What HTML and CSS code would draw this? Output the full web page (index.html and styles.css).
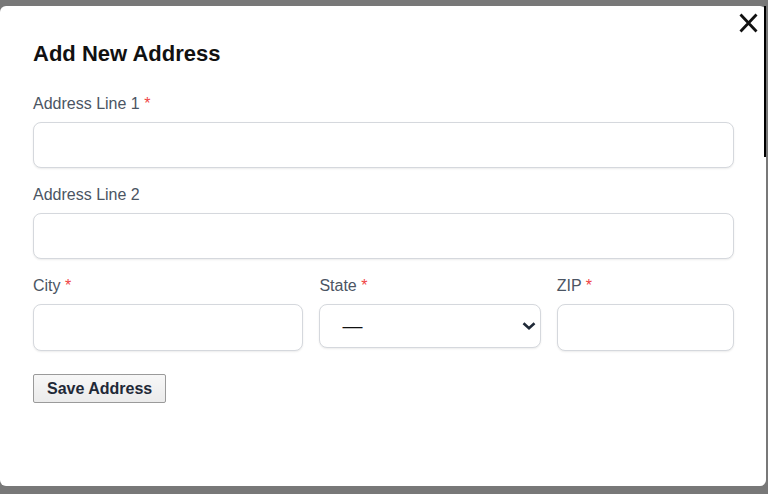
FILE: index.html
```html
<!DOCTYPE html>
<html lang="en">
<head>
<meta charset="utf-8">
<title>Add New Address</title>
<link rel="stylesheet" href="styles.css">
</head>
<body>
<div class="overlay">
  <div class="dialog">
    <button class="close" aria-label="Close">
      <svg width="19" height="20" viewBox="0 0 19 20"><path d="M1.5 1.5 L17.5 18.5 M17.5 1.5 L1.5 18.5" stroke="#111" stroke-width="2.8" stroke-linecap="butt" fill="none"/></svg>
    </button>
    <span class="edge"></span>
    <h2 class="title">Add New Address</h2>
    <form class="form">
      <div class="field">
        <label class="label">Address Line 1 <span class="req">*</span></label>
        <input class="input" type="text">
      </div>
      <div class="field">
        <label class="label">Address Line 2</label>
        <input class="input" type="text">
      </div>
      <div class="row">
        <div class="field">
          <label class="label">City <span class="req">*</span></label>
          <input class="input" type="text">
        </div>
        <div class="field">
          <label class="label">State <span class="req">*</span></label>
          <div class="select-wrap">
            <select class="select"><option>—</option></select>
            <svg class="chevron" width="14" height="8" viewBox="0 0 14 8"><path d="M1.5 1.2 L7 6.2 L12.5 1.2" stroke="#1f2937" stroke-width="2.6" fill="none" stroke-linejoin="miter"/></svg>
          </div>
        </div>
        <div class="field">
          <label class="label">ZIP <span class="req">*</span></label>
          <input class="input" type="text">
        </div>
      </div>
      <div class="actions">
        <button type="button" class="save">Save Address</button>
      </div>
    </form>
  </div>
</div>
</body>
</html>
```

FILE: styles.css
```css
* { box-sizing: border-box; }
html, body {
  margin: 0;
  padding: 0;
  height: 100%;
}
body {
  background: #787878;
  font-family: "Liberation Sans", Arial, sans-serif;
  overflow: hidden;
}
.overlay {
  padding-top: 6px;
}
.dialog {
  position: relative;
  width: 766px;
  height: 480px;
  background: #ffffff;
  border-radius: 6px;
  padding: 35px 32px 0 33px;
}
.close {
  position: absolute;
  top: 2px;
  right: 5px;
  width: 26px;
  height: 30px;
  padding: 0;
  border: 0;
  background: transparent;
  display: flex;
  align-items: center;
  justify-content: center;
}
.edge {
  position: absolute;
  right: 0;
  top: 0;
  width: 2px;
  height: 151px;
  background: #000;
}
.title {
  margin: 0 0 29px;
  font-size: 22px;
  line-height: 25px;
  font-weight: bold;
  color: #111111;
}
.form {
  display: flex;
  flex-direction: column;
}
.field {
  display: flex;
  flex-direction: column;
  margin-bottom: 18px;
}
.label {
  font-size: 16px;
  line-height: 18px;
  color: #4b5563;
  margin-bottom: 9px;
}
.req {
  color: #ef4444;
}
.input {
  height: 46px;
  width: 100%;
  border: 1px solid #d5d8dd;
  border-radius: 8px;
  box-shadow: 0 1px 2px rgba(0, 0, 0, 0.08);
  background: #fff;
  font-family: inherit;
  font-size: 16px;
  padding: 0 12px;
}
.row {
  display: grid;
  grid-template-columns: 270fr 221fr 177fr;
  column-gap: 16px;
}
.row .field {
  margin-bottom: 0;
}
.row .input {
  height: 47px;
}
.select-wrap {
  position: relative;
  height: 44px;
}
.select {
  appearance: none;
  -webkit-appearance: none;
  width: 100%;
  height: 44px;
  border: 1px solid #d5d8dd;
  border-radius: 8px;
  box-shadow: 0 1px 2px rgba(0, 0, 0, 0.08);
  background: #fff;
  font-family: inherit;
  font-size: 20px;
  color: #111;
  padding: 0 0 0 22px;
}
.chevron {
  position: absolute;
  right: 5px;
  top: 18px;
  pointer-events: none;
}
.actions {
  margin-top: 23px;
  display: flex;
}
.save {
  height: 29px;
  padding: 0 13px;
  border: 1px solid #9a9a9a;
  border-radius: 2px;
  background: linear-gradient(#f7f7f7, #ebebeb);
  font-family: inherit;
  font-size: 16px;
  font-weight: bold;
  color: #1f2937;
}
```
